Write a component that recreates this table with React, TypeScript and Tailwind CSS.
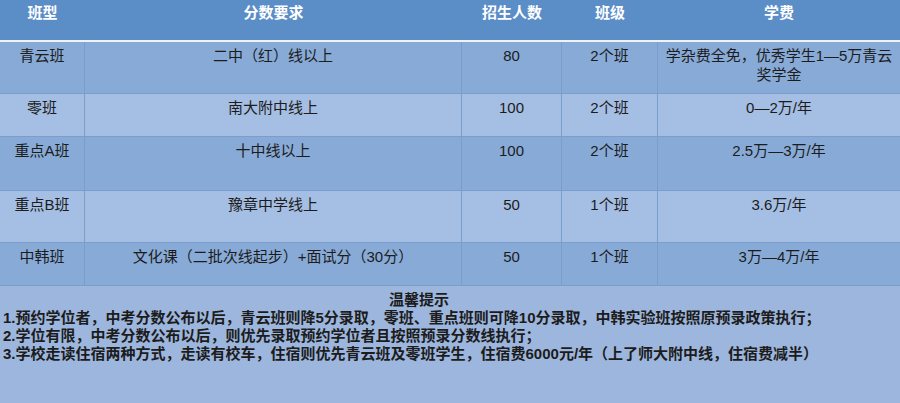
import React from "react";

const rows = [
  { t: "青云班", s: "二中（红）线以上", n: "80", c: "2个班", f: "学杂费全免，优秀学生1—5万青云奖学金", h: "h-[52px]", bg: "bg-[#88aad7]" },
  { t: "零班", s: "南大附中线上", n: "100", c: "2个班", f: "0—2万/年", h: "h-[43px]", bg: "bg-[#a5bee3]" },
  { t: "重点A班", s: "十中线以上", n: "100", c: "2个班", f: "2.5万—3万/年", h: "h-[54px]", bg: "bg-[#88aad7]" },
  { t: "重点B班", s: "豫章中学线上", n: "50", c: "1个班", f: "3.6万/年", h: "h-[52px]", bg: "bg-[#a5bee3]" },
  { t: "中韩班", s: "文化课（二批次线起步）+面试分（30分）", n: "50", c: "1个班", f: "3万—4万/年", h: "h-[43px]", bg: "bg-[#88aad7]" },
];

const font = { fontFamily: '"Liberation Sans", "Noto Sans CJK SC", sans-serif' };

export default function App() {
  return (
    <div className="w-[900px] h-[403px] overflow-hidden bg-[#9db6dd] text-[15px] leading-[19px] text-[#1c1c1c]" style={font}>
      <div className="grid grid-cols-[85px_377px_100px_96px_242px] h-[40px] bg-[#5b8dc7] text-white font-bold">
        <div className="text-center pt-[3px]">班型</div>
        <div className="text-center pt-[3px]">分数要求</div>
        <div className="text-center pt-[3px]">招生人数</div>
        <div className="text-center pt-[3px]">班级</div>
        <div className="text-center pt-[3px]">学费</div>
      </div>
      <div className="h-[2px] bg-[#eef4fb]" />
      {rows.map((r, i) => (
        <div
          key={i}
          className={`grid grid-cols-[85px_377px_100px_96px_242px] border-b border-[#7b9dcd] ${r.h} ${r.bg}`}
        >
          <div className="text-center pt-[4px] border-r border-[#7b9dcd]">{r.t}</div>
          <div className="text-center pt-[4px] border-r border-[#7b9dcd]">{r.s}</div>
          <div className="text-center pt-[4px] border-r border-[#7b9dcd]">{r.n}</div>
          <div className="text-center pt-[4px] border-r border-[#7b9dcd]">{r.c}</div>
          <div className="text-center pt-[4px] px-[6px]">{r.f}</div>
        </div>
      ))}
      <div className="pt-[5px] pl-[3px] font-bold leading-[18px]">
        <div className="w-[832px] text-center">温馨提示</div>
        <div>1.预约学位者，中考分数公布以后，青云班则降5分录取，零班、重点班则可降10分录取，中韩实验班按照原预录政策执行；</div>
        <div>2.学位有限，中考分数公布以后，则优先录取预约学位者且按照预录分数线执行；</div>
        <div>3.学校走读住宿两种方式，走读有校车，住宿则优先青云班及零班学生，住宿费6000元/年（上了师大附中线，住宿费减半）</div>
      </div>
    </div>
  );
}
